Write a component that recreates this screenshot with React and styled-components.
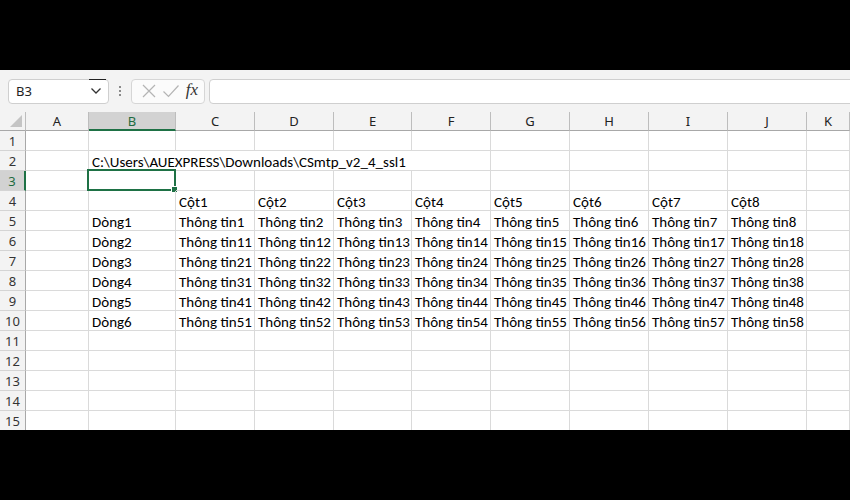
import React from 'react'
import styled, {createGlobalStyle} from 'styled-components'

const GlobalStyle = createGlobalStyle`
  html, body {
    margin: 0;
    padding: 0;
    background: #000;
  }
  body {
    width: 850px;
    height: 500px;
    overflow: hidden;
  }
`

const Screen = styled.div`
  display: flex;
  flex-direction: column;
  height: 500px;
  background: #000;
`

const Letterbox = styled.div`
  height: 70px;
  flex: none;
  background: #000;
`

const Workbook = styled.div`
  height: 360px;
  flex: none;
  display: flex;
  flex-direction: column;
  background: #fff;
  overflow: hidden;
`

const FormulaBar = styled.div`
  height: 42px;
  flex: none;
  display: flex;
  align-items: center;
  padding: 0 0 0 8px;
  background: #f3f3f3;
  box-sizing: border-box;
`

const NameBox = styled.div`
  position: relative;
  width: 101px;
  height: 25px;
  box-sizing: border-box;
  display: flex;
  align-items: center;
  justify-content: space-between;
  padding: 0 6px 0 7px;
  background: #fff;
  border: 1px solid #cfcfcf;
  border-radius: 4px;
  font-family: 'Noto Sans', sans-serif;
  font-size: 13px;
  color: #222;

  &::after {
    content: '';
    position: absolute;
    top: -1px;
    right: 2px;
    width: 17px;
    height: 1px;
    background: #222;
  }
`

const Grip = styled.div`
  width: 22px;
  display: flex;
  flex-direction: column;
  align-items: center;
  gap: 2px;

  span {
    width: 2px;
    height: 2px;
    background: #8a8a8a;
  }
`

const EditBox = styled.div`
  width: 74px;
  height: 25px;
  box-sizing: border-box;
  display: flex;
  align-items: center;
  justify-content: space-between;
  padding: 0 6px 0 9px;
  background: #fbfbfb;
  border: 1px solid #d6d6d6;
  border-radius: 4px;
`

const Fx = styled.span`
  font-family: 'Liberation Serif', serif;
  font-style: italic;
  font-size: 17px;
  color: #333;
  margin-top: -2px;
`

const FormulaInput = styled.div`
  flex: 1;
  height: 25px;
  margin-left: 4px;
  margin-right: -10px;
  box-sizing: border-box;
  background: #fff;
  border: 1px solid #cfcfcf;
  border-radius: 4px;
`

const Sheet = styled.div`
  flex: 1;
  display: grid;
  grid-template-columns: 26px 63px 87px 79px 79px 78px 79px 79px 79px 79px 79px 1fr;
  grid-template-rows: 19px;
  grid-auto-rows: 20px;
  overflow: hidden;
`

const ColHead = styled.div`
  box-sizing: border-box;
  display: flex;
  align-items: center;
  justify-content: center;
  background: ${p => (p.$active ? '#d2d2d2' : '#f3f3f3')};
  border-bottom: ${p => (p.$active ? '2px solid #1e7145' : '1px solid #a8a8a8')};
  border-right: 1px solid #bdbdbd;
  font-family: 'Noto Sans', sans-serif;
  font-size: 13px;
  color: ${p => (p.$active ? '#1e6b3f' : '#222')};
  padding-top: ${p => (p.$active ? '1px' : '0')};
`

const Corner = styled.div`
  position: relative;
  box-sizing: border-box;
  background: #f3f3f3;
  border-bottom: 1px solid #a8a8a8;
  border-right: 1px solid #bdbdbd;

  &::after {
    content: '';
    position: absolute;
    right: 3px;
    bottom: 3px;
    width: 0;
    height: 0;
    border-left: 12px solid transparent;
    border-bottom: 12px solid #c4c4c4;
  }
`

const RowHead = styled.div`
  box-sizing: border-box;
  display: flex;
  align-items: center;
  justify-content: center;
  background: ${p => (p.$active ? '#d2d2d2' : '#f3f3f3')};
  border-bottom: 1px solid #d4d4d4;
  border-right: ${p => (p.$active ? '2px solid #1e7145' : '1px solid #a8a8a8')};
  font-family: 'Noto Sans', sans-serif;
  font-size: 13px;
  color: ${p => (p.$active ? '#1e6b3f' : '#333')};
`

const Cell = styled.div`
  position: relative;
  box-sizing: border-box;
  grid-column: ${p => (p.$span ? `span ${p.$span}` : 'auto')};
  border-right: 1px solid #dadada;
  border-bottom: 1px solid #dadada;
  padding: 0 3px;
  display: flex;
  align-items: flex-end;
  white-space: nowrap;
  font-family: 'Carlito', 'Lato', sans-serif;
  font-size: 15px;
  line-height: 16px;
  color: #000;
`

const Selection = styled.div`
  position: absolute;
  left: -2px;
  top: -2px;
  right: -1px;
  bottom: -1px;
  border: 2px solid #1e7145;
  pointer-events: none;

  &::after {
    content: '';
    position: absolute;
    right: -4px;
    bottom: -4px;
    width: 5px;
    height: 5px;
    background: #1e7145;
    border: 1px solid #fff;
  }
`

const columns = ['A', 'B', 'C', 'D', 'E', 'F', 'G', 'H', 'I', 'J', 'K']

const buildRows = () => {
  const rows = {}
  rows[2] = {B: 'C:\\Users\\AUEXPRESS\\Downloads\\CSmtp_v2_4_ssl1'}
  rows[4] = {}
  'CDEFGHIJ'.split('').forEach((c, i) => {
    rows[4][c] = `Cột${i + 1}`
  })
  for (let r = 0; r < 6; r++) {
    const row = {B: `Dòng${r + 1}`}
    'CDEFGHIJ'.split('').forEach((c, i) => {
      row[c] = `Thông tin${r === 0 ? '' : r}${i + 1}`
    })
    rows[5 + r] = row
  }
  return rows
}

const data = buildRows()

const X = () => (
  <svg width="16" height="16" viewBox="0 0 16 16">
    <path d="M2 2 L14 14 M14 2 L2 14" stroke="#b4b4b4" strokeWidth="1.2" fill="none" />
  </svg>
)

const Check = () => (
  <svg width="18" height="16" viewBox="0 0 18 16">
    <path d="M1.5 8.5 L6.5 13.5 L16.5 2.5" stroke="#b4b4b4" strokeWidth="1.2" fill="none" />
  </svg>
)

const Chevron = () => (
  <svg width="12" height="8" viewBox="0 0 12 8">
    <path d="M1.5 1.5 L6 6 L10.5 1.5" stroke="#333" strokeWidth="1.3" fill="none" />
  </svg>
)

const renderRow = r => {
  const row = data[r] || {}
  const cells = []
  let skip = 0
  columns.forEach(c => {
    if (skip > 0) {
      skip--
      return
    }
    if (r === 2 && c === 'B') {
      cells.push(
        <Cell key={c} $span={5}>
          {row[c]}
        </Cell>
      )
      skip = 4
      return
    }
    cells.push(
      <Cell key={c}>
        {row[c] || ''}
        {r === 3 && c === 'B' && <Selection />}
      </Cell>
    )
  })
  return cells
}

const App = () => {
  const rowNums = Array.from({length: 15}, (_, i) => i + 1)

  return (
    <>
      <GlobalStyle />
      <Screen>
        <Letterbox />
        <Workbook>
          <FormulaBar>
            <NameBox>
              <span>B3</span>
              <Chevron />
            </NameBox>
            <Grip>
              <span />
              <span />
              <span />
            </Grip>
            <EditBox>
              <X />
              <Check />
              <Fx>fx</Fx>
            </EditBox>
            <FormulaInput />
          </FormulaBar>

          <Sheet>
            <Corner />
            {columns.map(c => (
              <ColHead key={c} $active={c === 'B'}>
                {c}
              </ColHead>
            ))}
            {rowNums.map(r => (
              <React.Fragment key={r}>
                <RowHead $active={r === 3}>{r}</RowHead>
                {renderRow(r)}
              </React.Fragment>
            ))}
          </Sheet>
        </Workbook>
        <Letterbox />
      </Screen>
    </>
  )
}

export default App
